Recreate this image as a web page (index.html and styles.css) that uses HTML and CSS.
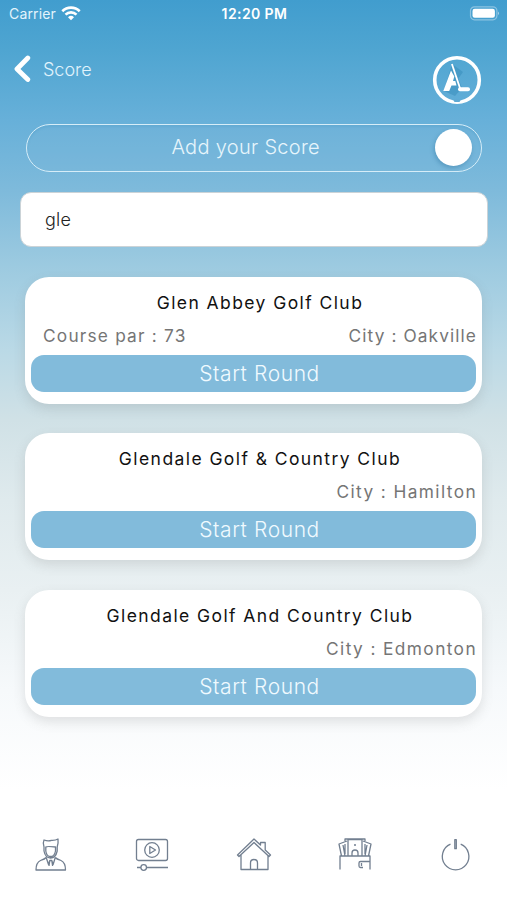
FILE: index.html
```html
<!DOCTYPE html>
<html lang="en">
<head>
<meta charset="utf-8">
<title>Score</title>
<link rel="stylesheet" href="styles.css">
</head>
<body>
<div class="screen">
  <div class="status">
    <div class="carrier"><span>Carrier</span>
      <svg width="20" height="15" viewBox="0 0 20 15" fill="none" stroke="#fff" stroke-width="2.6"><path d="M1.3 5.2a12.4 12.4 0 0 1 17.4 0M4.5 8.6a7.8 7.8 0 0 1 11 0"/><path d="M10 14.3l-3-3.1a4.3 4.3 0 0 1 6 0z" fill="#fff" stroke="none"/></svg>
    </div>
    <div class="time">12:20 PM</div>
    <svg class="battery" width="31" height="15" viewBox="0 0 31 15"><rect x="1.5" y=".8" width="26.4" height="13" rx="4" fill="none" stroke="#8cc3e2" stroke-width="1.2"/><rect x="3.5" y="2.8" width="22.4" height="9" rx="2.2" fill="#fff"/><path d="M29 5.5q2 1.8 0 3.6z" fill="#a9d1e8"/></svg>
  </div>
  <header class="header">
    <div class="back">
      <svg width="18" height="28" viewBox="0 0 18 28" fill="none" stroke="#fff" stroke-width="4.8" stroke-linecap="round" stroke-linejoin="round"><path d="M14.8 3L4 14l10.8 10.5"/></svg>
      <span>Score</span>
    </div>
    <svg class="logo" width="50" height="50" viewBox="0 0 50 50">
      <path d="M20 9L31 17l-5 7 4 9-7 8-11-5z" fill="#2c84b5" opacity=".4"/>
      <circle cx="25" cy="25" r="22.3" fill="none" stroke="#fff" stroke-width="3.6"/>
      <path d="M21 44.500l1.500 2.500h5l1.500-2.500z" fill="#5fa9d3"/>
      <path d="M19 15.500L11.300 36h5.900l2.300-5.500h5L23.300 26h-2.300l1.300-4.500z" fill="#fff"/>
      <path d="M21.500 11l7.800 22" stroke="#4c9dcb" stroke-width="1"/>
      <path d="M19.900 9l8.400 25" stroke="#fff" stroke-width="1.800"/>
      <path d="M28 34.300h8" stroke="#fff" stroke-width="4" stroke-linecap="round"/>
    </svg>
  </header>
  <div class="toggle"><span>Add your Score</span><i class="knob"></i></div>
  <div class="search"><span>gle</span></div>
  <main class="list">
    <article class="card">
      <h2>Glen Abbey Golf Club</h2>
      <div class="meta"><span>Course par : 73</span><span class="city oakville">City : Oakville</span></div>
      <div class="start"><span>Start Round</span></div>
    </article>
    <article class="card">
      <h2>Glendale Golf &amp; Country Club</h2>
      <div class="meta"><span class="city">City : Hamilton</span></div>
      <div class="start"><span>Start Round</span></div>
    </article>
    <article class="card">
      <h2>Glendale Golf And Country Club</h2>
      <div class="meta"><span class="city">City : Edmonton</span></div>
      <div class="start"><span>Start Round</span></div>
    </article>
  </main>
  <nav class="tabs">
    <svg viewBox="0 0 36 36"><path d="M11 4q4 1.500 7.500 .3 4 .2 6.500-1.300.5 4-.8 8v4q-1.500 7-6.700 7T11 15v-4q-1.500-4 0-7zM12.800 11q1-1 9.700 0v4q-1 5.500-5 5.500t-4.700-5.500zM13.200 21.500Q12 23 7.500 24.500 3 26.500 3 34h29.500q0-7.500-4.500-9.500-4.500-1.500-5.700-3M13.200 21.500l2.300 7 1.300-4h2l1.300 4 2.200-7M16.800 24.500l-.8 5.500M18.800 24.500l.8 5.500"/></svg>
    <svg viewBox="0 0 36 36"><rect x="2.500" y="3.500" width="31" height="21" rx="2"/><circle cx="18" cy="14" r="7.300"/><path d="M15.800 10.500v7l5.700-3.500zM3 31.500h4M12.500 31.500H34"/><circle cx="9.700" cy="31.500" r="2.800"/></svg>
    <svg viewBox="0 0 36 36"><path d="M1.500 19L18 3l6.500 6V6.500h4.700V14l5.300 5-1.500 1.500L18 6.500 3 20.500zM5 19v14.500h27V19M14.500 33.500V27q0-3.500 3.500-3.500t3.500 3.500v6.500"/></svg>
    <svg viewBox="0 0 36 36"><path d="M3 33.500V20h30v13.500M33 25.500H23.500q-1.500 0-1.500 1.500v3q0 1.500 1.500 1.500H26M24.500 27v3M4.500 20L2 8l8-3M31.500 20L34 8l-8-3M8 5V3h20v2M6 9l2 11M30 9l-2 11M11 20V3.500h14V20M15 20v-3q0-3 3-3t3 3v3M17 9h2M8 8v10M28 8v10"/></svg>
    <svg viewBox="0 0 36 36"><path d="M12.500 8.200A13.300 13.300 0 1 0 22.700 8.200M16.800 3.700h1.500v9h-1.500z"/></svg>
  </nav>
</div>
</body>
</html>
```
FILE: styles.css
```css
* { box-sizing: border-box; }
body { margin: 0; font-family: Inter, "Liberation Sans", sans-serif; font-weight: 300; }
.screen {
  width: 507px; height: 900px; display: flex; flex-direction: column; overflow: hidden;
  background: linear-gradient(#419dce 0, #4fa5d1 50px, #67b0d9 120px, #7ebadb 190px, #9ccae0 265px, #bad9e6 350px, #d0e1e6 420px, #dfeaed 500px, #e9f0f2 590px, #f6f9fb 690px, #fff 790px);
}
.status { height: 28px; flex: none; display: grid; grid-template-columns: 1fr 1fr 1fr; align-items: center; padding: 0 7px 2px 9px; color: #fff; font-size: 14px; }
.carrier { display: flex; align-items: center; gap: 5px; font-weight: 400; color: #e3f4fc; letter-spacing: .15px; }
.time { text-align: center; font-weight: 600; white-space: nowrap; letter-spacing: .4px; }
.battery { justify-self: end; }
.header { height: 96px; flex: none; display: flex; justify-content: space-between; padding: 27px 25px 0 13px; }
.back { display: flex; height: 28px; align-items: center; gap: 12px; color: #e1f3fc; font-size: 18px; }
.toggle { height: 48px; flex: none; margin: 0 25px 0 26px; border: 1.5px solid #d6edf8; border-radius: 24px; display: flex; align-items: center; justify-content: flex-end; padding: 0 9px 2px 0; color: #e7f5fc; font-size: 20px; letter-spacing: .3px; box-shadow: inset 0 2px 2px #3b8fbc33; background: #7cb7da44; }
.toggle span { margin-right: 115px; }
.knob { width: 37px; height: 37px; border-radius: 50%; background: #fff; box-shadow: -1px 2px 4px #296f9866; }
.search { height: 55px; flex: none; margin: 20px 19px 0 20px; border-radius: 11px; border: 1px solid #cbd3d7; background: #fff; display: flex; align-items: center; padding-left: 24px; font-size: 18px; color: #222; letter-spacing: .2px; }
.list { flex: none; margin: 30px 25px 0; display: flex; flex-direction: column; gap: 29.3px; }
.card { height: 127px; background: #fff; border-radius: 24px; padding: 15px 6px 12px; box-shadow: 0 5px 12px #70707030; display: flex; flex-direction: column; }
h2 { margin: 0; height: 22px; line-height: 22px; padding-left: 13px; font-size: 17.5px; font-weight: 400; text-align: center; color: #111; white-space: nowrap; letter-spacing: 1.42px; }
.meta { display: flex; height: 22px; line-height: 22px; margin-top: 11px; padding-left: 12px; font-size: 17.3px; font-weight: 400; color: #757575; letter-spacing: 1.2px; }
.city { margin-left: auto; margin-right: -1px; letter-spacing: 1.4px; }
.oakville { letter-spacing: 1.1px; }
.start { height: 37px; margin-top: 8px; padding-left: 12px; border-radius: 13px; background: #82bbdb; color: #f0faff; display: flex; align-items: center; justify-content: center; font-size: 21px; letter-spacing: .6px; }
.tabs { flex: none; margin: 119px 33px 0; display: flex; justify-content: space-between; }
.tabs svg { width: 36px; height: 36px; fill: none; stroke: #727f90; stroke-width: 1.3; stroke-linejoin: round; }
```
